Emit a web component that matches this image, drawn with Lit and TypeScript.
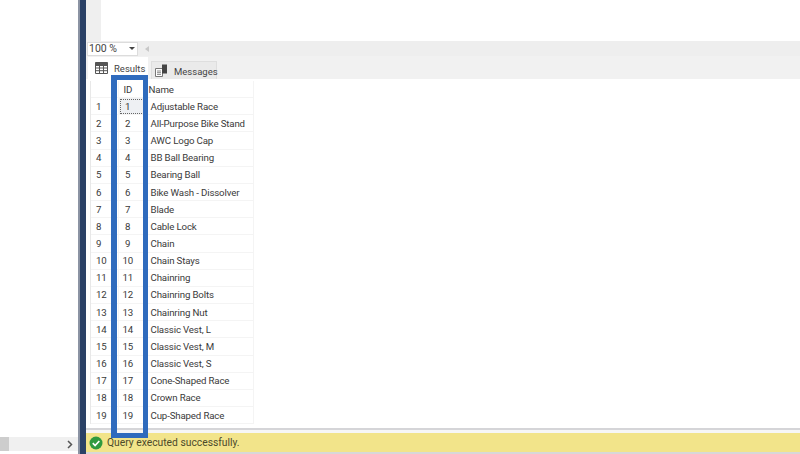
import { LitElement, html, css } from "lit";
import { customElement } from "lit/decorators.js";

const NAMES = [
  "Adjustable Race", "All-Purpose Bike Stand", "AWC Logo Cap", "BB Ball Bearing", "Bearing Ball",
  "Bike Wash - Dissolver", "Blade", "Cable Lock", "Chain", "Chain Stays", "Chainring", "Chainring Bolts",
  "Chainring Nut", "Classic Vest, L", "Classic Vest, M", "Classic Vest, S", "Cone-Shaped Race", "Crown Race", "Cup-Shaped Race",
];

@customElement("app-root")
export class AppRoot extends LitElement {
  static styles = css`
    :host { display: block; width: 800px; height: 454px; overflow: hidden; position: relative; background: #fff;
      font-family: Roboto, "Liberation Sans", Arial, sans-serif; font-size: 10px; color: #333; }
    .app { display: flex; height: 454px; }
    .side { width: 78px; flex: none; display: flex; flex-direction: column; justify-content: flex-end; background: #fff; }
    .hscroll { height: 14px; margin-bottom: 3px; background: #f0f0f0; display: flex; align-items: center; }
    .thumb { width: 9px; height: 14px; background: #cdcdcd; }
    .arrow { margin-left: auto; margin-right: 5px; display: flex; }
    .divider { width: 6px; flex: none; background: #2a4166; border-left: 2px solid #8b93a3; }
    .main { flex: 1; min-width: 0; display: flex; flex-direction: column; background: #f6f6f6; }
    .editor { height: 41px; flex: none; display: flex; background: #fff; }
    .gutter { width: 15px; background: #efefef; }
    .zoombar { height: 15px; flex: none; display: flex; align-items: center; gap: 7px; background: #eeeeee; padding-left: 1px; }
    .combo { width: 51px; height: 14px; box-sizing: border-box; background: #fff; border: 1px solid #dcdcdc; display: flex;
      align-items: center; justify-content: space-between; padding: 0 2px 0 1px; font-size: 10.5px; color: #444; }
    .caret { width: 0; height: 0; border: 3px solid transparent; border-top: 3px solid #444; border-bottom: 0; }
    .lscroll { width: 0; height: 0; border: 3.5px solid transparent; border-right: 4px solid #c8c8c8; border-left: 0; }
    .tabs { height: 23px; flex: none; display: flex; align-items: flex-end; padding-left: 2px; background: #f1f1f1; gap: 3px; }
    .tab { display: flex; flex: none; align-items: center; gap: 6px; box-sizing: border-box; font-size: 9.5px; color: #444; }
    .tab svg { flex: none; }
    .active { width: 60px; background: #fff; height: 22px; padding-left: 7px; }
    .other { width: 66px; background: #eaeaea; height: 18px; border: 1px solid #dedede; border-bottom: 0; padding-left: 3px; }
    .tab span { padding-top: 1px; }
    .results { flex: 1; min-height: 0; background: #fff; padding: 2px 0 0 4px; display: flex; flex-direction: column;
      border-bottom: 2px solid #d5d5d8; }
    .grid { width: 164px; display: grid; grid-template-columns: 28px 25.5px 109.5px; grid-auto-rows: 17.17px;
      border-left: 1px solid #e8e8e8; }
    .cell { display: flex; align-items: center; box-sizing: border-box; border-bottom: 1px solid #f4f4f4; border-right: 1px solid #f4f4f4;
      font-size: 9.7px; letter-spacing: -0.15px; white-space: nowrap; color: #3a3a3a; }
    .num { padding-left: 5px; }
    .id { justify-content: center; padding-right: 7px; }
    .name { padding-left: 6px; }
    .head.name { padding-left: 4px; }
    .sel { background: #eef0f3; outline: 1px dotted #666; outline-offset: -2px; }
    .status { height: 19px; flex: none; margin-top: 3px; background: #f2e48a; display: flex; align-items: center; gap: 4px; padding-left: 3px;
      font-size: 10.3px; color: #4b4a2a; }
    .foot { height: 2px; flex: none; background: #d8d8d8; }
    .mark { position: absolute; left: 111px; top: 75px; width: 37px; height: 363px; box-sizing: border-box; border: 5px solid #2f6bbd; border-left-width: 6px; }
    svg { display: block; }
  `;

  render() {
    return html`
      <div class="app">
        <div class="side">
          <div class="hscroll">
            <div class="thumb"></div>
            <span class="arrow"><svg width="6" height="9" viewBox="0 0 6 9"><path d="M1 1l3.500 3.500L1 8" fill="none" stroke="#555" stroke-width="1.500"/></svg></span>
          </div>
        </div>
        <div class="divider"></div>
        <div class="main">
          <div class="editor"><div class="gutter"></div></div>
          <div class="zoombar">
            <div class="combo"><span>100 %</span><span class="caret"></span></div>
            <span class="lscroll"></span>
          </div>
          <div class="tabs">
            <div class="tab active">
              <svg width="13" height="12" viewBox="0 0 13 12"><path d="M.5 .5h12v11H.5zM.5 3.500h12M.5 6h12M.5 8.700h12M4.500 3.500v8M8.500 3.500v8" fill="none" stroke="#555"/><path d="M.5 .5h12v3H.5z" fill="#555"/></svg>
              <span>Results</span>
            </div>
            <div class="tab other">
              <svg width="13" height="13" viewBox="0 0 13 13"><path d="M.5 4.500h7v8h-7z" fill="#fff" stroke="#777"/><path d="M2 7h4M2 8.700h4M2 10.400h4" stroke="#888"/><path d="M7 .5h5v9H7z" fill="#444"/></svg>
              <span>Messages</span>
            </div>
          </div>
          <div class="results">
            <div class="grid">
              <div class="cell head"></div>
              <div class="cell head id">ID</div>
              <div class="cell head name">Name</div>
              ${NAMES.map((n, i) => html`
                <div class="cell num">${i + 1}</div>
                <div class="cell id ${i === 0 ? "sel" : ""}">${i + 1}</div>
                <div class="cell name">${n}</div>
              `)}
            </div>
          </div>
          <div class="status">
            <svg width="14" height="14" viewBox="0 0 14 14"><circle cx="7" cy="7" r="6.500" fill="#2f9a3f"/><path d="M3.800 7.200l2.300 2.300 4.200-4.500" fill="none" stroke="#fff" stroke-width="1.700"/></svg>
            <span>Query executed successfully.</span>
          </div>
          <div class="foot"></div>
        </div>
      </div>
      <div class="mark"></div>
    `;
  }
}
